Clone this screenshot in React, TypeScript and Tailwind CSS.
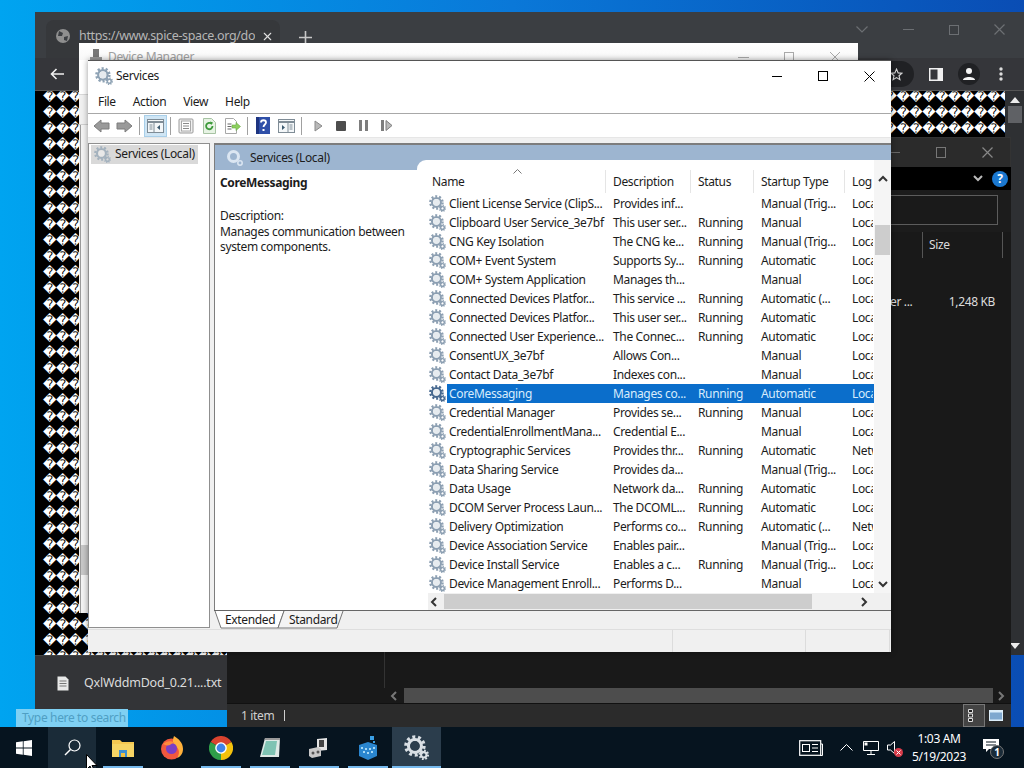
import type { ReactNode } from "react";
import { X } from "lucide-react";

const ui = "font-['Noto_Sans','Open_Sans',sans-serif] tracking-[-0.35px]";

type Row = [string, string, string, string, string];

const rows: Row[] = [
  ["Client License Service (ClipS...", "Provides inf...", "", "Manual (Trig...", "Loca"],
  ["Clipboard User Service_3e7bf", "This user ser...", "Running", "Manual", "Loca"],
  ["CNG Key Isolation", "The CNG ke...", "Running", "Manual (Trig...", "Loca"],
  ["COM+ Event System", "Supports Sy...", "Running", "Automatic", "Loca"],
  ["COM+ System Application", "Manages th...", "", "Manual", "Loca"],
  ["Connected Devices Platfor...", "This service ...", "Running", "Automatic (...", "Loca"],
  ["Connected Devices Platfor...", "This user ser...", "Running", "Automatic", "Loca"],
  ["Connected User Experience...", "The Connec...", "Running", "Automatic", "Loca"],
  ["ConsentUX_3e7bf", "Allows Con...", "", "Manual", "Loca"],
  ["Contact Data_3e7bf", "Indexes con...", "", "Manual", "Loca"],
  ["CoreMessaging", "Manages co...", "Running", "Automatic", "Loca"],
  ["Credential Manager", "Provides se...", "Running", "Manual", "Loca"],
  ["CredentialEnrollmentMana...", "Credential E...", "", "Manual", "Loca"],
  ["Cryptographic Services", "Provides thr...", "Running", "Automatic", "Netw"],
  ["Data Sharing Service", "Provides da...", "", "Manual (Trig...", "Loca"],
  ["Data Usage", "Network da...", "Running", "Automatic", "Loca"],
  ["DCOM Server Process Laun...", "The DCOML...", "Running", "Automatic", "Loca"],
  ["Delivery Optimization", "Performs co...", "Running", "Automatic (...", "Netw"],
  ["Device Association Service", "Enables pair...", "", "Manual (Trig...", "Loca"],
  ["Device Install Service", "Enables a c...", "Running", "Manual (Trig...", "Loca"],
  ["Device Management Enroll...", "Performs D...", "", "Manual", "Loca"],
];

const bad = "\uFFFD".repeat(75);

function Gear({ size = 17, c = "#8c9fb2", hub = "#e6ebef" }: { size?: number; c?: string; hub?: string }) {
  return (
    <svg width={size} height={size} viewBox="0 0 24 24" className="shrink-0">
      <circle cx="10.500" cy="10.500" r="8.600" fill="none" stroke={c} strokeWidth="3.400" strokeDasharray="2.800 2.600" />
      <circle cx="10.500" cy="10.500" r="6.200" fill="none" stroke={c} strokeWidth="3" />
      <circle cx="10.500" cy="10.500" r="4.400" fill={hub} />
      <circle cx="19" cy="19" r="4" fill="none" stroke={c} strokeWidth="2.200" strokeDasharray="1.600 1.500" />
      <circle cx="19" cy="19" r="2.600" fill="none" stroke={c} strokeWidth="2" />
    </svg>
  );
}

function ToolCell({ children, active }: { children: ReactNode; active?: boolean }) {
  return (
    <div className={`flex h-[22px] w-[23px] shrink-0 items-center justify-center ${active ? "border border-[#a9cfe9] bg-[#cfe5f4]" : ""}`}>
      {children}
    </div>
  );
}

function ToolSep() {
  return (
    <div className="flex h-[22px] w-[7px] shrink-0 justify-center">
      <div className="h-[18px] w-px self-center bg-[#a0a0a0]" />
    </div>
  );
}

function Toolbar() {
  return (
    <div className="flex h-[23px] items-center bg-white pl-[2px]">
      <ToolCell>
        <svg width="17" height="14" viewBox="0 0 17 14"><path d="M1 7l7-6v3h8v6H8v3z" fill="#9a9a9a" stroke="#7d7d7d" /></svg>
      </ToolCell>
      <ToolCell>
        <svg width="17" height="14" viewBox="0 0 17 14"><path d="M16 7L9 1v3H1v6h8v3z" fill="#9a9a9a" stroke="#7d7d7d" /></svg>
      </ToolCell>
      <ToolSep />
      <div className="w-px" />
      <ToolCell active>
        <svg width="17" height="14" viewBox="0 0 17 14"><rect x=".5" y=".5" width="16" height="13" fill="#f4f7f9" stroke="#7f8c96" /><path d="M1 3h15" stroke="#7f8c96" strokeWidth="2" /><path d="M7 4v9" stroke="#7f8c96" /><path d="M13 6v5l-3-2.500z" fill="#3c5a70" /><path d="M2.500 6h3M2.500 8h3M2.500 10h3" stroke="#7f8c96" /></svg>
      </ToolCell>
      <ToolSep />
      <ToolCell>
        <svg width="16" height="16" viewBox="0 0 16 16"><rect x="1" y="1" width="14" height="14" rx="1" fill="#f0f0f0" stroke="#9a9a9a" /><rect x="3.500" y="3" width="9" height="10" fill="#fff" stroke="#a8a8a8" /><path d="M5 5.500h6M5 8h6M5 10.500h6" stroke="#8a8a8a" /></svg>
      </ToolCell>
      <div className="w-px" />
      <ToolCell>
        <svg width="15" height="16" viewBox="0 0 15 16"><path d="M1.500.5h8l4 4v11h-12z" fill="#e7f3e4" stroke="#a7c3a3" /><path d="M10.500 8a3.200 3.200 0 1 1-1-2.300" fill="none" stroke="#3c9a3a" strokeWidth="1.800" /><path d="M8 3.500l3 1-1.500 2.500z" fill="#3c9a3a" /></svg>
      </ToolCell>
      <ToolCell>
        <svg width="17" height="16" viewBox="0 0 17 16"><path d="M1.500.5h8l3 3v12h-11z" fill="#fff" stroke="#a8a8a8" /><path d="M3.500 6h4M3.500 8.500h4M3.500 11h4" stroke="#666" /><path d="M8 7h4V4.500l4.500 4-4.500 4V10H8z" fill="#8ccf5e" stroke="#6aa844" strokeWidth=".6" /></svg>
      </ToolCell>
      <ToolSep />
      <ToolCell>
        <svg width="14" height="17" viewBox="0 0 14 17"><rect width="14" height="17" fill="#2f4fa8" /><rect x="0" width="3" height="17" fill="#1d3480" /><path d="M5 5.500c0-3 5-3 5 0 0 2-2.500 2-2.500 4.500" fill="none" stroke="#fff" strokeWidth="1.800" /><rect x="6.500" y="12" width="2" height="2" fill="#fff" /></svg>
      </ToolCell>
      <div className="w-px" />
      <ToolCell>
        <svg width="17" height="14" viewBox="0 0 17 14"><rect x=".5" y=".5" width="16" height="13" fill="#f4f7f9" stroke="#7f8c96" /><path d="M1 3h15" stroke="#7f8c96" strokeWidth="2" /><path d="M10 4v9" stroke="#7f8c96" /><path d="M4 6v5l3-2.500z" fill="#3c5a70" /><path d="M11.500 6h3M11.500 8h3M11.500 10h3" stroke="#7f8c96" /></svg>
      </ToolCell>
      <ToolSep />
      <div className="w-[2px]" />
      <ToolCell>
        <svg width="9" height="12" viewBox="0 0 9 12"><path d="M1 1l7 5-7 5z" fill="#b8b8b8" stroke="#8a8a8a" /></svg>
      </ToolCell>
      <div className="-ml-[1px]">
        <ToolCell>
          <svg width="10" height="10" viewBox="0 0 10 10"><rect width="10" height="10" rx="1" fill="#4d4d4d" /></svg>
        </ToolCell>
      </div>
      <ToolCell>
        <svg width="9" height="11" viewBox="0 0 9 11"><rect width="3" height="11" fill="#7d7d7d" /><rect x="6" width="3" height="11" fill="#7d7d7d" /></svg>
      </ToolCell>
      <ToolCell>
        <svg width="12" height="11" viewBox="0 0 12 11"><rect width="3" height="11" fill="#7d7d7d" /><path d="M5 .5l6 5-6 5z" fill="#b8b8b8" stroke="#7d7d7d" /></svg>
      </ToolCell>
    </div>
  );
}

function Chevron({ dir, color = "#333" }: { dir: "up" | "down" | "left" | "right"; color?: string }) {
  const d = { up: "M1 6l4-4 4 4", down: "M1 2l4 4 4-4", left: "M6 1L2 5l4 4", right: "M2 1l4 4-4 4" }[dir];
  return (
    <svg width="10" height="10" viewBox="0 0 10 10" className="shrink-0 overflow-visible">
      <path d={d} fill="none" stroke={color} strokeWidth="2" />
    </svg>
  );
}

function ServiceRow({ row, selected }: { row: Row; selected: boolean }) {
  return (
    <div className="flex h-[19px] items-center whitespace-nowrap">
      <div className="flex w-[19px] shrink-0 justify-end pr-px">
        <Gear c={selected ? "#46688f" : "#8c9fb2"} />
      </div>
      <div className={`flex h-[19px] flex-1 items-center ${selected ? "bg-[#0b6ecb] text-[#d8ecfc]" : ""}`}>
        <div className="w-[159px] shrink-0 overflow-hidden pl-[2px]">{row[0]}</div>
        <div className="w-[85px] shrink-0 overflow-hidden pl-[7px]">{row[1]}</div>
        <div className="w-[63px] shrink-0 overflow-hidden pl-[7px]">{row[2]}</div>
        <div className="w-[91px] shrink-0 overflow-hidden pl-[7px]">{row[3]}</div>
        <div className="w-[28px] shrink-0 overflow-hidden pl-[7px]">{row[4]}</div>
      </div>
    </div>
  );
}

function ServicesWindow() {
  return (
    <div className={`${ui} absolute left-[88px] top-[60px] flex h-[592px] w-[803px] flex-col border-t border-[#555] bg-[#f0f0f0] text-[12px] leading-[16px] text-[#1c1c1c] shadow-[0_0_6px_rgba(0,0,0,0.4)]`}>
      <div className="flex h-[30px] items-center bg-white pl-[7px]">
        <Gear size={18} c="#8ea2b4" />
        <span className="ml-[3px]">Services</span>
        <div className="-mr-[1px] ml-auto flex h-full items-center">
          <div className="flex w-[46px] justify-center">
            <div className="h-px w-[10px] bg-black" />
          </div>
          <div className="flex w-[46px] justify-center">
            <div className="h-[10px] w-[10px] border border-black" />
          </div>
          <div className="flex w-[46px] justify-center">
            <svg width="11" height="11" viewBox="0 0 11 11"><path d="M.5.5l10 10M10.500.5l-10 10" stroke="#000" /></svg>
          </div>
        </div>
      </div>
      <div className="flex h-[23px] items-center gap-[17px] border-b border-[#a8a8a8] bg-white pl-[10px]">
        <span>File</span>
        <span>Action</span>
        <span>View</span>
        <span>Help</span>
      </div>
      <Toolbar />
      <div className="h-[6px] border-t border-[#e6e6e6]" />
      <div className="flex min-h-0 flex-1 flex-col">
        <div className="flex min-h-0 flex-1">
          <div className="h-[485px] w-[122px] shrink-0 border border-[#8f8f8f] bg-white px-[2px] pt-[1px]">
            <div className="flex h-[19px] w-[107px] items-center whitespace-nowrap bg-[#d9d9d9] pb-[1px] pl-[3px]">
              <Gear size={17} c="#a4b2be" hub="#e8e8e8" />
              <span className="ml-[4px]">Services (Local)</span>
            </div>
          </div>
          <div className="ml-[4px] flex min-w-0 flex-1 flex-col">
            <div className="flex h-[467px] flex-col border-l border-t-2 border-[#7d7d7d]">
              <div className="flex h-[25px] shrink-0 items-center bg-[#9db5d0] pl-[11px]">
                <svg width="18" height="18" viewBox="0 0 18 18"><circle cx="7.500" cy="7.500" r="5" fill="none" stroke="#dbe6f2" strokeWidth="3" /><circle cx="14" cy="14" r="2.200" fill="none" stroke="#dbe6f2" strokeWidth="1.500" /></svg>
                <span className="ml-[6px]">Services (Local)</span>
              </div>
              <div className="flex min-h-0 flex-1 bg-white">
                <div className="w-[202px] shrink-0 pl-[5px] pt-[5px]">
                  <div className="font-bold">CoreMessaging</div>
                  <div className="mt-[17px]">Description:</div>
                  <div className="w-[195px] leading-[15px]">Manages communication between system components.</div>
                </div>
                <div className="relative z-10 -mt-[10px] flex min-w-0 flex-1 flex-col rounded-tl-[9px] bg-white">
                  <div className="flex min-h-0 flex-1">
                    <div className="min-w-0 flex-1 overflow-hidden pl-[11px]">
                      <div className="relative flex h-[34px] items-end whitespace-nowrap pb-[1px]">
                        <div className="h-[23px] w-[178px] shrink-0 border-r border-[#e5e5e5] pl-[4px] pt-[4px]">Name</div>
                        <div className="h-[23px] w-[85px] shrink-0 border-r border-[#e5e5e5] pl-[7px] pt-[4px]">Description</div>
                        <div className="h-[23px] w-[63px] shrink-0 border-r border-[#e5e5e5] pl-[7px] pt-[4px]">Status</div>
                        <div className="h-[23px] w-[91px] shrink-0 border-r border-[#e5e5e5] pl-[7px] pt-[4px]">Startup Type</div>
                        <div className="h-[23px] w-[28px] shrink-0 pl-[7px] pt-[4px]">Log</div>
                        <svg width="9" height="5" viewBox="0 0 9 5" className="absolute left-[85px] top-[9px]"><path d="M.5 4.500l4-4 4 4" fill="none" stroke="#777" /></svg>
                      </div>
                      {rows.map((r, i) => (
                        <ServiceRow key={i} row={r} selected={r[0] === "CoreMessaging"} />
                      ))}
                    </div>
                    <div className="flex w-[17px] shrink-0 flex-col items-center bg-[#f5f5f5] pt-[15px]">
                      <Chevron dir="up" />
                      <div className="mt-[40px] h-[30px] w-[15px] bg-[#cdcdcd]" />
                      <div className="mb-[3px] mt-auto">
                        <Chevron dir="down" />
                      </div>
                    </div>
                  </div>
                  <div className="ml-[11px] flex h-[17px] shrink-0 items-center bg-[#f0f0f0] pl-[2px]">
                    <Chevron dir="left" />
                    <div className="ml-[4px] h-[15px] w-[368px] bg-[#cdcdcd]" />
                    <div className="ml-[48px]">
                      <Chevron dir="right" />
                    </div>
                  </div>
                </div>
              </div>
            </div>
            <div className="relative flex h-[18px] border-t border-[#666] pl-[11px] pt-[1px]">
              <svg width="140" height="19" viewBox="0 0 140 19" className="absolute left-0 top-0">
                <path d="M1 0l6 17h57l6-17" fill="#fff" stroke="#777" />
                <path d="M70 0l-6 17h59l6-17" fill="#f4f4f4" stroke="#777" />
              </svg>
              <span className="relative w-[64px]">Extended</span>
              <span className="relative">Standard</span>
            </div>
          </div>
        </div>
      </div>
      <div className="flex h-[23px] shrink-0 justify-end border-t border-[#dedede] pr-px">
        <div className="w-[133px] border-l border-[#dcdcdc]" />
        <div className="w-[85px] border-x border-[#dcdcdc]" />
      </div>
    </div>
  );
}

function DeviceManager() {
  return (
    <div className={`${ui} absolute left-[79px] top-[43px] flex h-[570px] w-[779px] flex-col bg-[#f0f0f0] text-[12px] text-[#a0a0a0]`}>
      <div className="flex h-[17px] items-start bg-gradient-to-b from-white to-[#f8f8f8] pl-[10px] pt-[6px] leading-[16px]">
        <svg width="14" height="14" viewBox="0 0 14 14"><rect x="4" y="0" width="6" height="10" fill="#777" /><rect x="1" y="8" width="12" height="6" fill="#999" /></svg>
        <span className="ml-[5px]">Device Manager</span>
        <div className="ml-auto flex">
          <div className="flex w-[46px] justify-center pt-[8px]"><div className="h-px w-[11px] bg-[#aaa]" /></div>
          <div className="flex w-[46px] justify-center pt-[3px]"><div className="h-[11px] w-[10px] border border-[#aaa]" /></div>
          <div className="flex w-[46px] justify-center pt-[3px]">
            <svg width="10" height="10" viewBox="0 0 10 10"><path d="M0 0l10 10M10 0L0 10" stroke="#aaa" /></svg>
          </div>
        </div>
      </div>
      <div className="h-[35px] border-b border-[#d8d8d8] bg-white" />
      <div className="h-[30px] border-b border-[#d0d0d0]" />
      <div className="ml-[1px] w-[8px] flex-1 border-l border-[#9a9a9a] bg-[#f4f4f4]">
        <div className="mt-[420px] h-[30px] w-[7px] bg-[#c8c8c8]" />
      </div>
    </div>
  );
}

function Explorer() {
  return (
    <div className={`${ui} absolute left-[227px] top-[137px] flex h-[590px] w-[784px] flex-col bg-[#191919] text-[12px] leading-[16px] text-[#dcdcdc]`}>
      <div className="flex h-[30px] shrink-0 items-center justify-end border-r border-t border-[#333] bg-[#2b2b2b]">
        <div className="h-px w-[10px] bg-[#666]" />
        <div className="ml-[36px] h-[11px] w-[10px] border border-[#777]" />
        <svg width="11" height="11" viewBox="0 0 11 11" className="ml-[36px] mr-[17px]"><path d="M.5.5l10 10M10.500.5l-10 10" stroke="#888" strokeWidth="1.200" /></svg>
      </div>
      <div className="flex h-[23px] shrink-0 items-center justify-end bg-black pr-[3px]">
        <Chevron dir="down" color="#bbb" />
        <div className="ml-[9px] flex h-[16px] w-[16px] items-center justify-center rounded-full bg-[#1b78d0] text-[12px] font-bold text-white">?</div>
      </div>
      <div className="flex h-[42px] shrink-0 justify-end bg-[#1c1c1c] pr-[13px] pt-[5px]">
        <div className="h-[30px] w-[300px] border border-[#5c5c5c] bg-[#1a1a1a]" />
      </div>
      <div className="flex h-[27px] shrink-0 justify-end pr-[8px]">
        <div className="h-[26px] w-[81px] border-x border-[#555] pl-[6px] pt-[5px]">Size</div>
      </div>
      <div className="flex min-h-0 flex-1">
        <div className="h-[393px] w-[158px] shrink-0 self-end border-r border-[#333]" />
        <div className="flex flex-1 pl-[505px] pr-[16px] pt-[35px]">
          <span>er ...</span>
          <span className="ml-auto">1,248 KB</span>
        </div>
      </div>
      <div className="flex h-[16px] shrink-0 items-center border-b border-[#111]">
        <div className="ml-[163px]">
          <Chevron dir="left" color="#777" />
        </div>
        <div className="ml-[4px] h-[15px] flex-1 bg-[#4d4d4d]" />
        <div className="mx-[4px]">
          <Chevron dir="right" color="#777" />
        </div>
      </div>
      <div className="flex h-[23px] shrink-0 items-center bg-[#2b2b2b] pl-[14px] text-[#cfcfcf]">
        <span>1 item</span>
        <div className="ml-[10px] h-[11px] w-px bg-[#cfcfcf]" />
        <div className="ml-auto flex h-[23px] w-[22px] items-center border border-[#777] bg-[#444] pl-[4px]">
          <svg width="5" height="13" viewBox="0 0 5 13"><path d="M.5.5h4v3h-4zM.5 5h4v3h-4zM.5 9.500h4v3h-4z" fill="#222" stroke="#ddd" /></svg>
        </div>
        <svg width="14" height="11" viewBox="0 0 14 11" className="ml-[4px] mr-[8px]"><rect width="14" height="11" fill="#ddeefa" /><rect x="1" y="2.500" width="12" height="7" fill="#7fa8cf" /></svg>
      </div>
    </div>
  );
}

function ChromeWindow() {
  return (
    <div className={`${ui} absolute left-[35px] top-[12px] flex h-[698px] w-[989px] flex-col text-[12px]`}>
      <div className="flex h-[46px] shrink-0 items-end bg-[#3b3e42] pl-[11px]">
        <div className="flex h-[38px] w-[234px] shrink-0 items-start rounded-t-lg bg-[#36383b] pl-[10px] pt-[8px] text-[#b5b5b5]">
          <svg width="14" height="14" viewBox="0 0 14 14" className="mt-[1px] shrink-0"><circle cx="7" cy="7" r="7" fill="#8f8f8f" /><path d="M3 2l4 2-1 3-4 0zM8 8l4-1-1 5-3-1z" fill="#3b3e42" /></svg>
          <span className="ml-[9px] w-[176px] shrink-0 overflow-hidden whitespace-nowrap text-[12.5px] leading-[16px]">https://www.spice-space.org/dou</span>
          <X size={13} strokeWidth={2} color="#e0e0e0" className="ml-[6px] mt-[2px] shrink-0" />
        </div>
        <svg width="13" height="13" viewBox="0 0 13 13" className="mb-[14px] ml-[19px] shrink-0"><path d="M6.500 0v13M0 6.500h13" stroke="#c8c8c8" strokeWidth="1.600" /></svg>
        <div className="mb-[23px] ml-auto flex items-center">
          <svg width="12" height="7" viewBox="0 0 12 7"><path d="M.5.500l5.500 5.500L11.500.500" fill="none" stroke="#6c6f73" strokeWidth="1.200" /></svg>
          <div className="ml-[35px] h-px w-[11px] bg-[#6c6f73]" />
          <div className="ml-[35px] h-[10px] w-[10px] border border-[#6c6f73]" />
          <svg width="11" height="11" viewBox="0 0 11 11" className="ml-[35px] mr-[19px]"><path d="M.5.5l10 10M10.500.5l-10 10" stroke="#6c6f73" strokeWidth="1.200" /></svg>
        </div>
      </div>
      <div className="flex h-[33px] shrink-0 items-center border-b border-[#555] bg-[#35363a] pl-[15px]">
        <svg width="14" height="12" viewBox="0 0 14 12"><path d="M6.500 1L1.500 6l5 5M2 6h12" fill="none" stroke="#f0f0f0" strokeWidth="1.600" /></svg>
        <div className="ml-auto flex items-center">
          <div className="flex h-[26px] w-[40px] items-center justify-end rounded-r-full bg-[#202124] pr-[11px]">
            <svg width="13" height="13" viewBox="0 0 24 24"><path d="M12 2l3 7 7 .6-5.400 4.700 1.700 7.200L12 17.700 5.700 21.500l1.700-7.200L2 9.600 9 9z" fill="none" stroke="#d8d8d8" strokeWidth="2" /></svg>
          </div>
          <svg width="14" height="13" viewBox="0 0 14 13" className="ml-[15px]"><rect width="14" height="13" fill="#f0f0f0" /><rect x="1.500" y="1.500" width="7" height="10" fill="#35363a" /></svg>
          <div className="ml-[15px] flex h-[22px] w-[22px] items-center justify-center rounded-full bg-[#202124]">
            <svg width="12" height="12" viewBox="0 0 12 12"><circle cx="6" cy="3" r="3" fill="#f4f4f4" /><path d="M0 12c0-4 12-4 12 0z" fill="#f4f4f4" /></svg>
          </div>
          <svg width="4" height="14" viewBox="0 0 4 14" className="ml-[19px] mr-[21px]"><circle cx="2" cy="2" r="1.700" fill="#ddd" /><circle cx="2" cy="7" r="1.700" fill="#ddd" /><circle cx="2" cy="12" r="1.700" fill="#ddd" /></svg>
        </div>
      </div>
      <div className="flex min-h-0 flex-1 bg-[#3b3e42]">
        <div className="h-[564px] min-w-0 flex-1 overflow-hidden bg-black pl-[8px] font-['DejaVu_Sans',sans-serif] text-[13px] leading-[16px] tracking-[-0.4px] text-white">
          <div className="-mt-[2px]">
            {Array.from({ length: 36 }, (_, i) => (
              <div key={i} className="h-[16px] whitespace-nowrap">{bad}</div>
            ))}
          </div>
        </div>
        <div className="flex h-[564px] w-[19px] shrink-0 flex-col items-center bg-[#2e3033] pt-[6px]">
          <svg width="10" height="6" viewBox="0 0 10 6"><path d="M5 0l5 6H0z" fill="#ececec" /></svg>
          <div className="mt-[3px] h-[17px] w-[14px] bg-[#5f6165]" />
          <svg width="10" height="6" viewBox="0 0 10 6" className="mb-[6px] mt-auto"><path d="M5 6l5-6H0z" fill="#ececec" /></svg>
        </div>
      </div>
      <div className="flex h-[55px] w-[192px] shrink-0 items-center border-t border-[#444] bg-[#333437] pl-[22px] text-[#dcdcdc]">
        <svg width="12" height="15" viewBox="0 0 12 15" className="shrink-0"><path d="M.5.500h8l3 3v11H.500z" fill="#e8e8e8" /><path d="M2.500 5h7M2.500 7.500h7M2.500 10h7" stroke="#777" /></svg>
        <span className="ml-[15px] whitespace-nowrap text-[12.5px] tracking-[-0.2px]">QxlWddmDod_0.21....txt</span>
      </div>
    </div>
  );
}

function TaskIcon({ children, on, active }: { children: ReactNode; on?: boolean; active?: boolean }) {
  return (
    <div className={`relative flex h-[41px] w-[49px] shrink-0 items-center justify-center ${active ? "bg-[#2b3d4c]" : ""}`}>
      {children}
      {on && <div className={`absolute bottom-0 h-[2px] bg-[#76b9ed] ${active ? "left-0 right-0" : "left-[5px] right-[4px]"}`} />}
    </div>
  );
}

function Taskbar() {
  return (
    <div className={`${ui} absolute bottom-0 left-0 flex h-[41px] w-[1024px] items-center bg-[#06141f] text-[12px] text-white`}>
      <div className="flex h-full w-[48px] items-center justify-center">
        <svg width="16" height="16" viewBox="0 0 16 16"><path d="M0 2.300l6.800-1v6.300H0zM7.600 1.200L16 0v7.600H7.600zM0 8.400h6.800v6.300L0 13.700zM7.600 8.400H16V16l-8.400-1.200z" fill="#fff" /></svg>
      </div>
      <div className="flex h-full w-[48px] items-center justify-center bg-[#1a2b38]">
        <svg width="17" height="17" viewBox="0 0 17 17"><circle cx="10.500" cy="6.500" r="5.500" fill="none" stroke="#fff" strokeWidth="1.200" /><path d="M6.500 10.500L1 16" stroke="#fff" strokeWidth="1.400" /></svg>
      </div>
      <div className="w-[2px]" />
      <TaskIcon on>
        <svg width="22" height="18" viewBox="0 0 22 18"><path d="M0 1h8l2 2h12v15H0z" fill="#f5c851" /><rect y="5" width="22" height="13" fill="#f7d565" /><rect x="7" y="11" width="8" height="7" fill="#3d8fd1" /><rect x="9" y="14" width="4" height="4" fill="#f0c040" /></svg>
      </TaskIcon>
      <TaskIcon>
        <svg width="24" height="24" viewBox="0 0 24 24">
          <circle cx="11.500" cy="13" r="10.500" fill="#f2583e" />
          <path d="M14 0c5 3 9 7 9 13 0 5-3 8-6 9 3-4 3-10-3-13-2-3-1-6 0-9z" fill="#ffb13b" />
          <circle cx="11.500" cy="12.500" r="5.500" fill="#7b3fc4" />
          <path d="M3 8c3-3 8-4 12-1-3 0-4 1-5 2-3 1-5 0-7-1z" fill="#ff8a3c" />
        </svg>
      </TaskIcon>
      <TaskIcon on>
        <svg width="24" height="24" viewBox="0 0 24 24">
          <path d="M12 12L1.600 6A12 12 0 0 1 22.400 6z" fill="#d8432f" />
          <path d="M12 12l10.400-6A12 12 0 0 1 12 24z" fill="#f4c20d" />
          <path d="M12 12v12A12 12 0 0 1 1.600 6z" fill="#2f9e49" />
          <circle cx="12" cy="12" r="5.800" fill="#fff" />
          <circle cx="12" cy="12" r="4.400" fill="#3f83e8" />
        </svg>
      </TaskIcon>
      <TaskIcon on>
        <svg width="22" height="22" viewBox="0 0 22 22"><path d="M6 1h15l-1 19H1z" fill="#dfe9e6" /><path d="M7 4h11l-2 14H3z" fill="#7fc3b3" /><path d="M6 1h15v2H5.500z" fill="#9a9a9a" /></svg>
      </TaskIcon>
      <TaskIcon on>
        <svg width="22" height="22" viewBox="0 0 22 22"><path d="M9 2l10-1v12l-10 1z" fill="#e4e4e4" /><rect x="11" y="3" width="5" height="7" fill="#444" /><path d="M1 12l9-2 3 2v7l-9 2-3-2z" fill="#c8c8c8" /><circle cx="5" cy="16" r="1.500" fill="#555" /><circle cx="10" cy="15" r="1.500" fill="#555" /></svg>
      </TaskIcon>
      <TaskIcon on>
        <svg width="20" height="24" viewBox="0 0 20 24"><path d="M1 9l9-3 9 3v11l-9 4-9-4z" fill="#2a86cf" /><path d="M3 11h2v2H3zM7 12h2v2H7zM11 12h2v2h-2zM15 11h2v2h-2zM5 15h2v2H5zM9 16h2v2H9zM13 15h2v2h-2z" fill="#a5d8f5" /><rect x="12" y="0" width="4" height="4" fill="#3aa0e6" /><rect x="15" y="5" width="2" height="2" fill="#3aa0e6" /></svg>
      </TaskIcon>
      <TaskIcon on active>
        <Gear size={25} c="#d9dfe4" hub="#2b3d4c" />
      </TaskIcon>
      <div className="ml-auto flex items-center">
        <svg width="24" height="16" viewBox="0 0 24 16"><rect x=".7" y=".7" width="21" height="14.600" fill="none" stroke="#fff" strokeWidth="1.200" /><path d="M22 4h1.500v11.500H21" fill="none" stroke="#fff" /><rect x="3.500" y="4.500" width="7" height="7" fill="none" stroke="#fff" /><path d="M13 4.500h6M13 8h6M13 11.500h6" stroke="#fff" /></svg>
        <svg width="13" height="7" viewBox="0 0 13 7" className="ml-[17px]"><path d="M.5 6.500l6-6 6 6" fill="none" stroke="#fff" /></svg>
        <svg width="16" height="14" viewBox="0 0 16 14" className="ml-[10px]"><path d="M.5.500h15v9H.5zM8 9.500V13M4 13.500h8" fill="none" stroke="#fff" /><rect x="1.500" y="1.500" width="3" height="3" fill="#fff" /></svg>
        <div className="relative ml-[8px] h-[14px] w-[17px]">
          <svg width="9" height="13" viewBox="0 0 9 13"><path d="M.5 4h3l4-3.500v12l-4-3.500h-3z" fill="none" stroke="#fff" /></svg>
          <div className="absolute bottom-[-2px] left-[7px] flex h-[9px] w-[9px] items-center justify-center rounded-full bg-[#d83b4a]">
            <svg width="5" height="5" viewBox="0 0 5 5"><path d="M.5.5l4 4M4.500.5l-4 4" stroke="#fff" /></svg>
          </div>
        </div>
        <div className="flex w-[70px] flex-col items-center leading-[18px]">
          <span>1:03 AM</span>
          <span>5/19/2023</span>
        </div>
        <div className="relative ml-[9px] mr-[24px] h-[18px] w-[17px]">
          <svg width="16" height="14" viewBox="0 0 16 14"><path d="M0 0h16v10H6l-3 3v-3H0z" fill="#fff" /><path d="M3 3h10M3 6h10" stroke="#06141f" /></svg>
          <div className="absolute left-[7px] top-[6px] flex h-[14px] w-[14px] items-center justify-center rounded-full border border-[#777] bg-[#1a2b38] text-[10px] font-bold leading-none">1</div>
        </div>
      </div>
    </div>
  );
}

export default function App() {
  return (
    <div className="relative h-[768px] w-[1024px] overflow-hidden bg-gradient-to-r from-[#00a4f0] via-[#0a78d8] to-[#0a4db4]">
      <ChromeWindow />
      <Explorer />
      <DeviceManager />
      <ServicesWindow />
      <div className={`${ui} absolute left-[16px] top-[709px] flex h-[18px] w-[112px] items-center whitespace-nowrap bg-[#7fd0f3] pl-[6px] text-[12px] text-[#4f9fc4]`}>Type here to search</div>
      <Taskbar />
      <svg width="12" height="18" viewBox="0 0 12 18" className="absolute left-[86px] top-[754px]"><path d="M.5.5v15l3.500-3.500 2.500 5.500 2-1-2.500-5h5z" fill="#fff" stroke="#000" /></svg>
    </div>
  );
}
